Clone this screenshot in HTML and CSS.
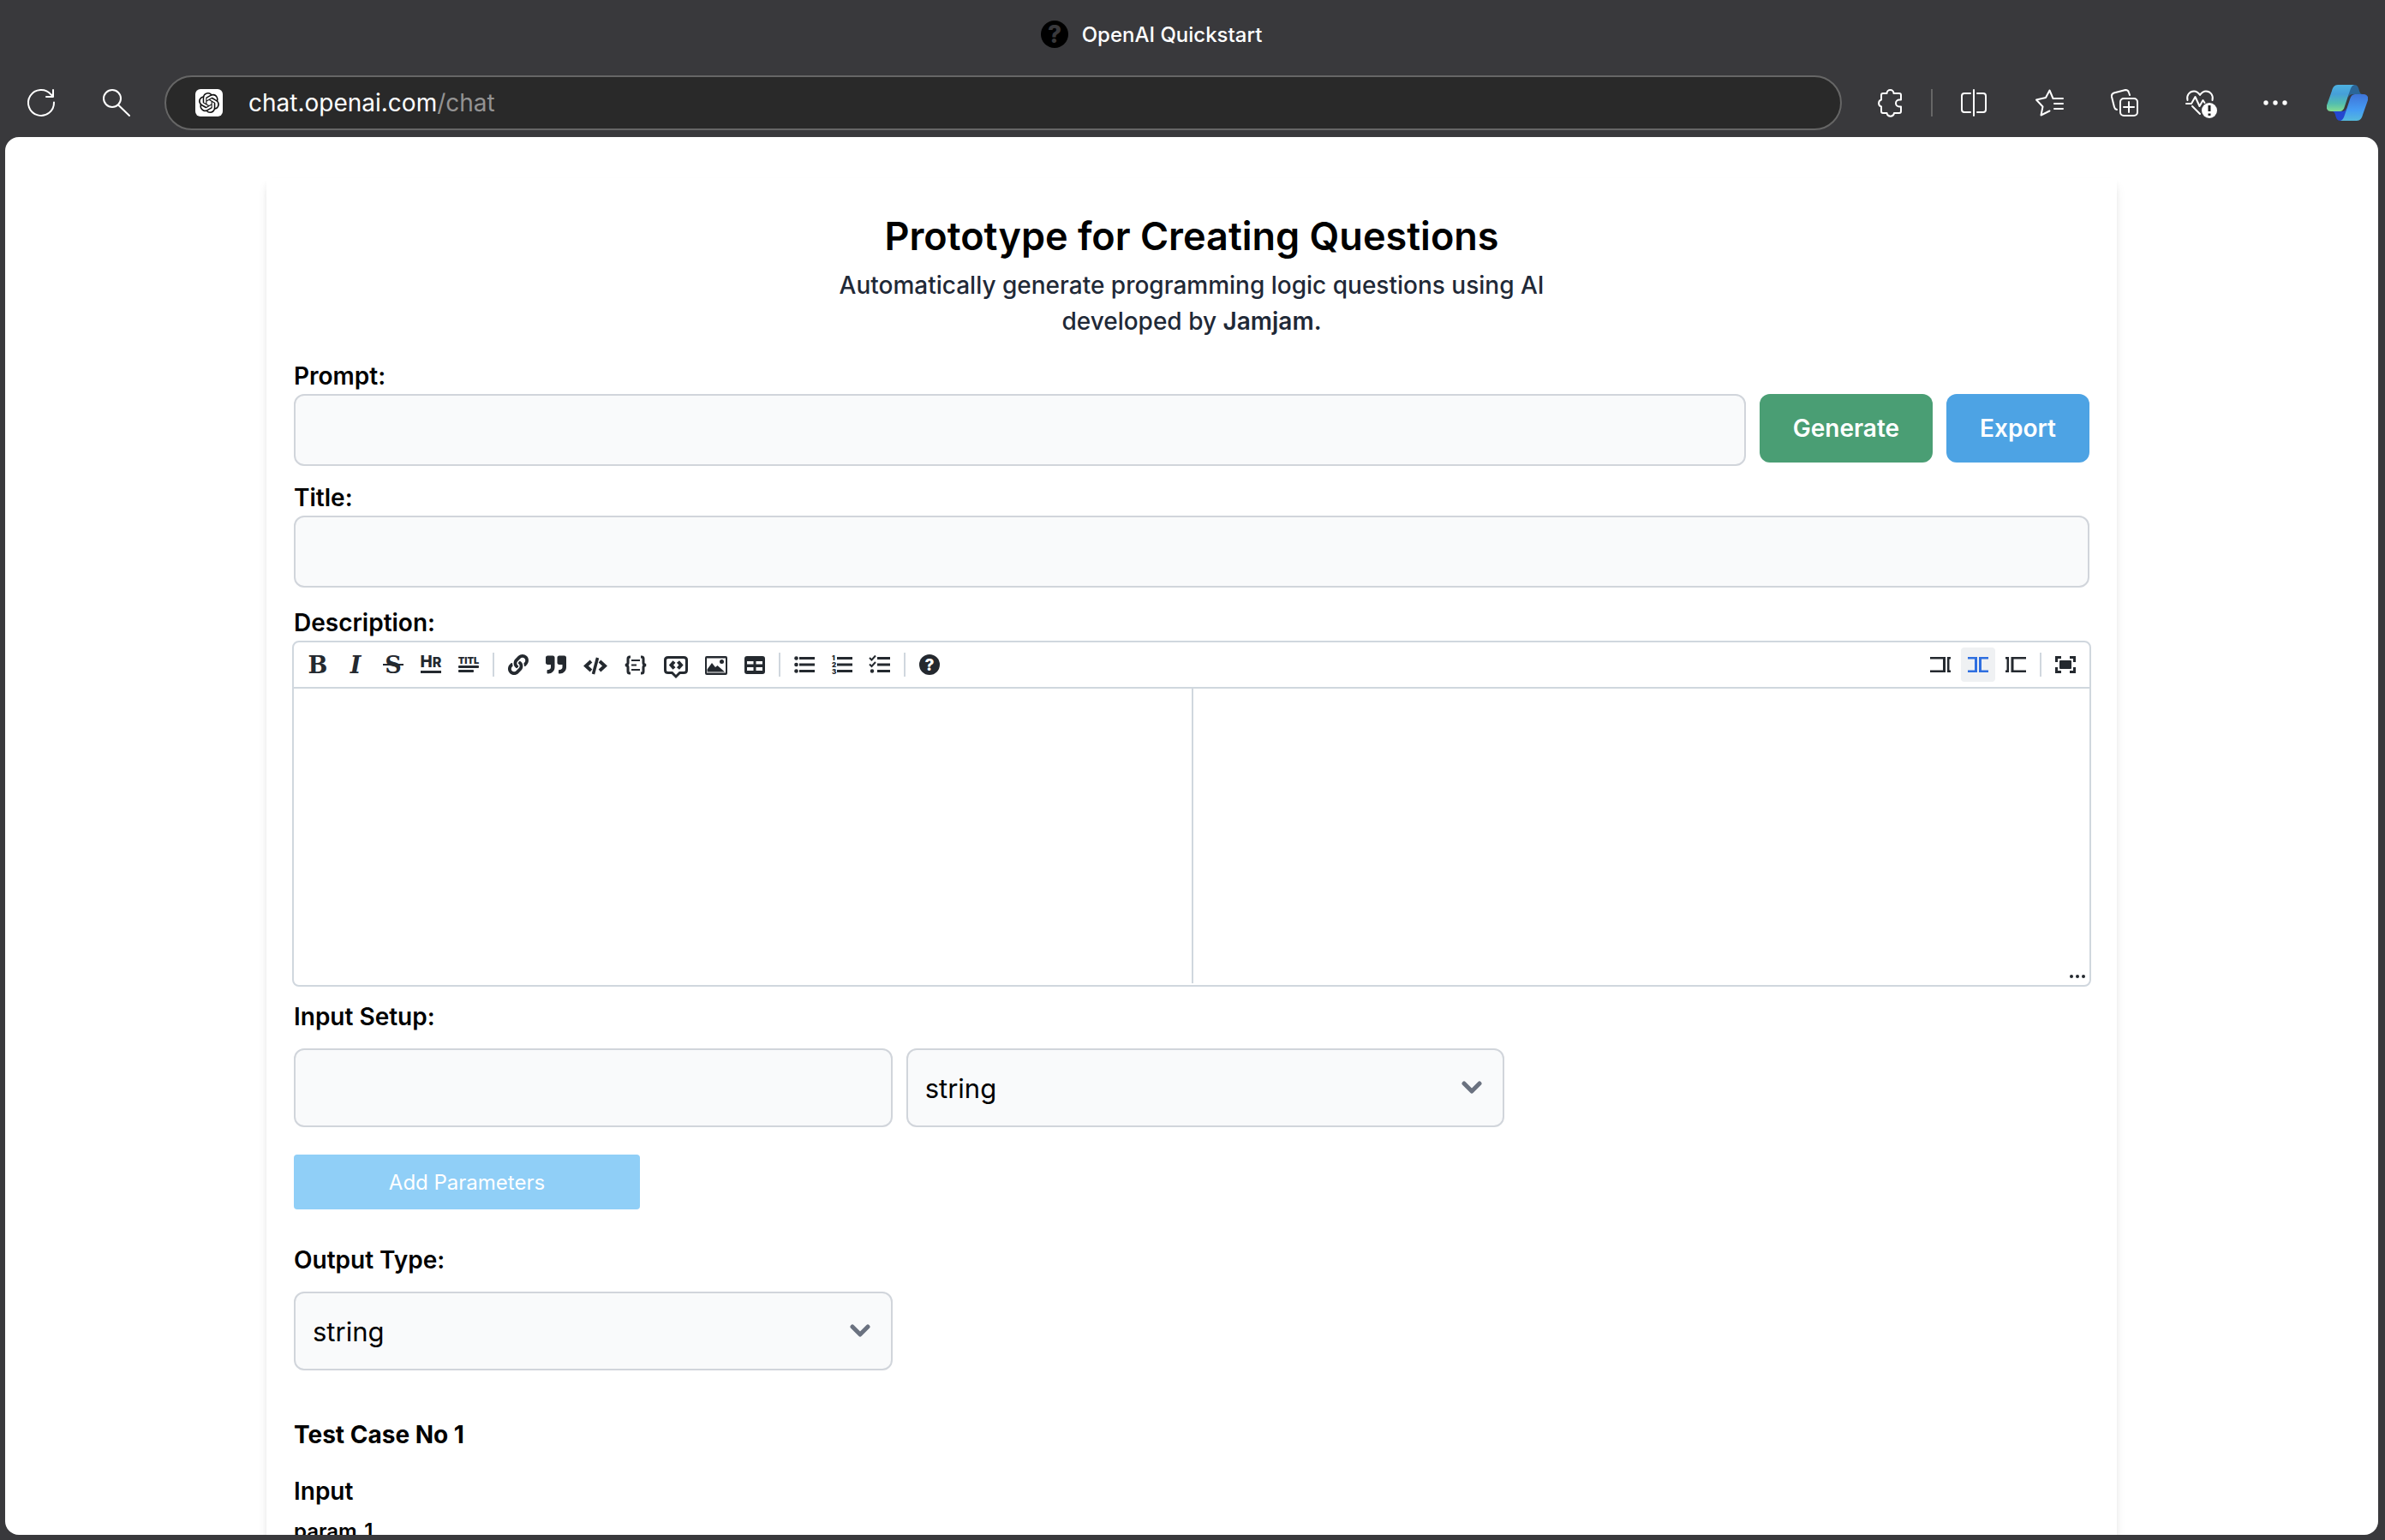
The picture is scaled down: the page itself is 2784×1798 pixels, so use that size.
FILE: index.html
```html
<!DOCTYPE html>
<html lang="en">
<head>
<meta charset="utf-8">
<title>OpenAI Quickstart</title>
<link rel="stylesheet" href="styles.css">
</head>
<body>
<div class="window">
  <header class="titlebar">
    <svg class="icon-md" viewBox="0 0 32 32" aria-hidden="true"><circle cx="16" cy="16" r="16" fill="#000"/><text class="favicon-mark" x="16" y="26" text-anchor="middle">?</text></svg>
    <span class="tab-title">OpenAI Quickstart</span>
  </header>

  <nav class="navbar" aria-label="Browser">
    <div class="nav-group">
      <button class="nav-btn" type="button" aria-label="Reload"><svg class="icon-md line" viewBox="0 0 32 32"><path d="M31 15.500A15 15 0 1 1 27.500 6.300L30 8.800M30 1v8h-8"/></svg></button>
      <button class="nav-btn" type="button" aria-label="Search"><svg class="icon-md line" viewBox="0 0 32 32"><circle cx="11" cy="11" r="10"/><path d="M18 18.500L31 31"/></svg></button>
    </div>
    <div class="address">
      <svg class="icon-md" viewBox="0 0 32 32" aria-hidden="true"><rect width="32" height="32" rx="6" fill="#fff"/><path transform="translate(4 4)" fill="#111" d="M22.2819 9.8211a5.9847 5.9847 0 0 0-.5157-4.9108 6.0462 6.0462 0 0 0-6.5098-2.9A6.0651 6.0651 0 0 0 4.9807 4.1818a5.9847 5.9847 0 0 0-3.9977 2.9 6.0462 6.0462 0 0 0 .7427 7.0966 5.98 5.98 0 0 0 .511 4.9107 6.051 6.051 0 0 0 6.5146 2.9001A5.9847 5.9847 0 0 0 13.2599 24a6.0557 6.0557 0 0 0 5.7718-4.2058 5.9894 5.9894 0 0 0 3.9977-2.9001 6.0557 6.0557 0 0 0-.7475-7.0729zm-9.022 12.6081a4.4755 4.4755 0 0 1-2.8764-1.0408l.1419-.0804 4.7783-2.7582a.7948.7948 0 0 0 .3927-.6813v-6.7369l2.02 1.1686a.071.071 0 0 1 .038.052v5.5826a4.504 4.504 0 0 1-4.4945 4.4944zm-9.6607-4.1254a4.4708 4.4708 0 0 1-.5346-3.0137l.142.0852 4.783 2.7582a.7712.7712 0 0 0 .7806 0l5.8428-3.3685v2.3324a.0804.0804 0 0 1-.0332.0615L9.74 19.9502a4.4992 4.4992 0 0 1-6.1408-1.6464zM2.3408 7.8956a4.485 4.485 0 0 1 2.3655-1.9728V11.6a.7664.7664 0 0 0 .3879.6765l5.8144 3.3543-2.0201 1.1685a.0757.0757 0 0 1-.071 0l-4.8303-2.7865A4.504 4.504 0 0 1 2.3408 7.872zm16.5963 3.8558L13.1038 8.364 15.1192 7.2a.0757.0757 0 0 1 .071 0l4.8303 2.7913a4.4944 4.4944 0 0 1-.6765 8.1042v-5.6772a.79.79 0 0 0-.407-.667zm2.0107-3.0231l-.142-.0852-4.7735-2.7818a.7759.7759 0 0 0-.7854 0L9.409 9.2297V6.8974a.0662.0662 0 0 1 .0284-.0615l4.8303-2.7866a4.4992 4.4992 0 0 1 6.6802 4.66zM8.3065 12.863l-2.02-1.1638a.0804.0804 0 0 1-.038-.0567V6.0742a4.4992 4.4992 0 0 1 7.3757-3.4537l-.142.0805L8.704 5.459a.7948.7948 0 0 0-.3927.6813zm1.0976-2.3654l2.602-1.4998 2.6069 1.4998v2.9994l-2.5974 1.4997-2.6067-1.4997Z"/></svg>
      <span class="url">chat.openai.com<span class="url-path">/chat</span></span>
    </div>
    <div class="nav-tools">
      <button class="nav-btn" type="button" aria-label="Extensions"><svg class="icon-md line" viewBox="0 0 32 32"><path d="M6 7a2 2 0 0 1 2-2h4.500a4 4 0 0 1 8 0H27a2 2 0 0 1 2 2v5.500h-2a3.500 3.500 0 0 0 0 8h2V26a2 2 0 0 1-2 2h-6a4.300 4.300 0 0 1-8.500 0H8a2 2 0 0 1-2-2v-5.500a4.200 4.200 0 0 1 0-8z"/></svg></button>
      <span class="nav-sep"></span>
      <button class="nav-btn" type="button" aria-label="Split screen"><svg class="icon-md line" viewBox="0 0 32 32"><path d="M16 1v30M12 5H5a3 3 0 0 0-3 3v16a3 3 0 0 0 3 3h7M20 5h7a3 3 0 0 1 3 3v16a3 3 0 0 1-3 3h-7"/></svg></button>
      <button class="nav-btn" type="button" aria-label="Favorites"><svg class="icon-md line" viewBox="0 0 32 32"><path d="M20.500 11L16.500 1.500 12 10 1 12.500l7.500 8-2 10 10-5M20.500 11H32M22 17h10M22 23h10"/></svg></button>
      <button class="nav-btn" type="button" aria-label="Collections"><svg class="icon-md line" viewBox="0 0 32 32"><rect x="11" y="11" width="20" height="20" rx="4"/><path d="M21 15v12M15 21h12M7 24a4 4 0 0 1-3-3L1 9a4 4 0 0 1 2.500-4.500L17 1a4 4 0 0 1 4 3l1 3"/></svg></button>
      <button class="nav-btn" type="button" aria-label="Browser essentials"><svg class="icon-md line" viewBox="0 0 32 32"><path d="M1.500 13C0 7 4 2.500 9 2.500c3 0 5 1.500 7 4.500 2-3 4-4.500 7-4.500 5 0 9 4.500 7.500 10.500M0 17h6l4.500-8 5 11 4-7 2 3M7 20l9 9"/><circle cx="27" cy="25" r="9" fill="#fff" stroke="none"/><path class="alert" d="M27 19v7M27 28.500v2.500"/></svg></button>
      <button class="nav-btn" type="button" aria-label="Settings and more"><svg class="icon-md" viewBox="0 0 32 32" fill="#fff"><circle cx="5" cy="16" r="2.700"/><circle cx="16" cy="16" r="2.700"/><circle cx="27" cy="16" r="2.700"/></svg></button>
    </div>
    <button class="nav-btn" type="button" aria-label="Copilot"><svg class="icon-lg" viewBox="0 0 48 48">
      <defs>
        <linearGradient id="cg1" x1="0" y1="0" x2="0" y2="1"><stop offset="0" stop-color="#4db1e0"/><stop offset=".35" stop-color="#469fd8"/><stop offset=".7" stop-color="#52bdb0"/><stop offset="1" stop-color="#84dc90"/></linearGradient>
        <linearGradient id="cg2" x1="0" y1="0" x2="0" y2="1"><stop offset="0" stop-color="#3f74d8"/><stop offset=".6" stop-color="#459cf3"/><stop offset="1" stop-color="#55b9dc"/></linearGradient>
      </defs>
      <path fill="#2b6698" d="M27 3h5c4 0 5 3 6 7 1 3 2 4 4 4H31c-3 0-5 1-6 4z"/>
      <path fill="#2447cf" d="M21 45h-5c-4 0-5-3-6-7-1-3-2-4-4-4h11c3 0 5-1 6-4z"/>
      <path fill="url(#cg1)" d="M13 3h19c-3 1-4 4-5 7l-6 18c-1 4-3 6-6 6H5c-4 0-6-3-5-7l6-17c1-4 3-7 7-7z"/>
      <path fill="url(#cg2)" d="M35 45H16c3-1 4-4 5-7l6-18c1-4 3-6 6-6h10c4 0 6 3 5 7l-6 17c-1 4-3 7-7 7z"/>
    </svg></button>
  </nav>

  <div class="viewport">
    <main class="card">
      <div class="intro">
        <h1>Prototype for Creating Questions</h1>
        <p>Automatically generate programming logic questions using AI<br>developed by <strong>Jamjam.</strong></p>
      </div>

      <form class="form">
        <div class="field">
          <label for="prompt">Prompt:</label>
          <div class="row">
            <input class="box grow" id="prompt" type="text">
            <button class="btn btn-green" type="button">Generate</button>
            <button class="btn btn-blue" type="button">Export</button>
          </div>
        </div>

        <div class="field field-title">
          <label for="title">Title:</label>
          <input class="box" id="title" type="text">
        </div>

        <div class="field field-desc">
          <label for="description">Description:</label>
          <div class="editor">
            <div class="toolbar">
              <div class="tools">
                <button type="button" aria-label="Bold"><svg width="24" height="24" viewBox="0 0 24 24"><text class="slab" x="12" y="22" text-anchor="middle">B</text></svg></button>
                <button type="button" aria-label="Italic"><svg width="24" height="24" viewBox="0 0 24 24"><text class="slab slanted" x="12" y="22" text-anchor="middle">I</text></svg></button>
                <button type="button" aria-label="Strikethrough"><svg width="24" height="24" viewBox="0 0 24 24"><text class="slab" x="12" y="22" text-anchor="middle">S</text><path d="M0 11h24v2H0z"/></svg></button>
                <button type="button" aria-label="Horizontal rule"><svg width="24" height="24" viewBox="0 0 24 24"><text class="hr-mark" x="12" y="15" text-anchor="middle">H<tspan class="hr-small">R</tspan></text><path d="M0 19h24v3H0z"/></svg></button>
                <button type="button" aria-label="Title"><svg width="24" height="24" viewBox="0 0 24 24"><text class="titl-mark" x="12" y="11" text-anchor="middle">TITL</text><rect y="13" width="24" height="3" rx="1"/><rect y="18" width="18" height="3" rx="1"/></svg></button>
                <span class="sep"></span>
                <button type="button" aria-label="Link"><svg width="24" height="24" viewBox="0 0 512 512"><path d="M326.612 185.391c59.747 59.809 58.927 155.698.36 214.59-.11.12-.24.25-.36.37l-67.2 67.2c-59.27 59.27-155.699 59.262-214.96 0-59.27-59.26-59.27-155.7 0-214.96l37.106-37.106c9.84-9.84 26.786-3.3 27.294 10.606.648 17.722 3.826 35.527 9.69 52.721 1.986 5.822.567 12.262-3.783 16.612l-13.087 13.087c-28.026 28.026-28.905 73.66-1.155 101.96 28.024 28.579 74.086 28.749 102.325.51l67.2-67.19c28.191-28.191 28.073-73.757 0-101.83-3.701-3.694-7.429-6.564-10.341-8.569a16.037 16.037 0 0 1-6.947-12.606c-.396-10.567 3.348-21.456 11.698-29.806l21.054-21.055c5.521-5.521 14.182-6.199 20.584-1.731a152.482 152.482 0 0 1 20.522 17.197zM467.547 44.449c-59.261-59.262-155.69-59.27-214.96 0l-67.2 67.2c-.12.12-.25.25-.36.37-58.566 58.892-59.387 154.781.36 214.59a152.454 152.454 0 0 0 20.521 17.196c6.402 4.468 15.064 3.789 20.584-1.731l21.054-21.055c8.35-8.35 12.094-19.239 11.698-29.806a16.037 16.037 0 0 0-6.947-12.606c-2.912-2.005-6.64-4.875-10.341-8.569-28.073-28.073-28.191-73.639 0-101.83l67.2-67.19c28.239-28.239 74.3-28.069 102.325.51 27.75 28.3 26.872 73.934-1.155 101.96l-13.087 13.087c-4.35 4.35-5.769 10.79-3.783 16.612 5.864 17.194 9.042 34.999 9.69 52.721.509 13.906 17.454 20.446 27.294 10.606l37.106-37.106c59.271-59.259 59.271-155.699.001-214.959z"/></svg></button>
                <button type="button" aria-label="Quote"><svg width="24" height="24" viewBox="0 0 512 512"><path d="M464 32H336c-26.500 0-48 21.500-48 48v128c0 26.500 21.500 48 48 48h80v64c0 35.300-28.700 64-64 64h-8c-13.300 0-24 10.700-24 24v48c0 13.300 10.700 24 24 24h8c88.400 0 160-71.600 160-160V80c0-26.500-21.500-48-48-48zm-288 0H48C21.500 32 0 53.500 0 80v128c0 26.500 21.500 48 48 48h80v64c0 35.300-28.700 64-64 64h-8c-13.300 0-24 10.700-24 24v48c0 13.300 10.700 24 24 24h8c88.400 0 160-71.600 160-160V80c0-26.500-21.500-48-48-48z"/></svg></button>
                <button type="button" aria-label="Inline code"><svg class="stroke" width="28" height="24" viewBox="0 0 28 24"><path stroke-width="4" d="M9 8l-6 5.500L9 19M19 8l6 5.500L19 19"/><path stroke-width="3.500" d="M16.500 4l-5 19"/></svg></button>
                <button type="button" aria-label="Code block"><svg class="stroke" width="26" height="24" viewBox="0 0 26 24"><path stroke-width="3" d="M7 3H6Q4 3 4 5v5q0 2-3 2.500Q4 13 4 15v5q0 2 2 2h1M19 3h1q2 0 2 2v5q0 2 3 2.500-3 .5-3 2.500v5q0 2-2 2h-1"/><path stroke-width="2" d="M8 7h10M8 12.500h6M8 18h10"/></svg></button>
                <button type="button" aria-label="Comment"><svg class="stroke" width="28" height="24" viewBox="0 0 28 24"><path stroke-width="3" d="M5 3.500h18q3.500 0 3.500 3v12q0 3-3.500 3h-4.500L14 26l-4.500-4.500H5q-3.500 0-3.500-3v-12q0-3 3.500-3z"/><path stroke-width="4" d="M12 8.500l-3.500 4 3.500 4M16.500 8.500l3.500 4-3.500 4"/></svg></button>
                <button type="button" aria-label="Image"><svg width="26" height="26" viewBox="0 0 26 26"><path fill-rule="evenodd" d="M2 3h22q2 0 2 2v18q0 2-2 2H2q-2 0-2-2V5q0-2 2-2zm0 2.500v17h22v-17z"/><circle cx="19.500" cy="9.500" r="2.500"/><path d="M2.500 21.500v-3L8 11l4 5 2.500-2 8.500 7.500z"/></svg></button>
                <button type="button" aria-label="Table"><svg width="24" height="24" viewBox="0 0 24 24"><path fill-rule="evenodd" d="M3 2h18q3 0 3 3v15q0 3-3 3H3q-3 0-3-3V5q0-3 3-3zm0 6v3.500h7.500V8zm10.500 0v3.500H21V8zM3 15v4h7.500v-4zm10.500 0v4H21v-4z"/></svg></button>
                <span class="sep"></span>
                <button type="button" aria-label="Bulleted list"><svg width="24" height="24" viewBox="0 0 24 24"><circle cx="2.500" cy="4.500" r="2.300"/><circle cx="2.500" cy="12" r="2.300"/><circle cx="2.500" cy="19.500" r="2.300"/><path d="M6 3h18v3H6zM6 10.500h18v3H6zM6 18h18v3H6z"/></svg></button>
                <button type="button" aria-label="Numbered list"><svg width="24" height="24" viewBox="0 0 24 24"><text class="digit" x="0" y="7">1</text><text class="digit" x="0" y="15">2</text><text class="digit" x="0" y="23">3</text><path d="M6 3h18v3H6zM6 10.500h18v3H6zM6 18h18v3H6z"/></svg></button>
                <button type="button" aria-label="Check list"><svg width="24" height="24" viewBox="0 0 24 24"><path fill="none" stroke="currentColor" stroke-width="2" d="M0 4l2.500 2.500 4.500-5M0 11.500L2.500 14 7 9"/><circle cx="3" cy="19.500" r="2.200"/><path d="M9 3h15v3H9zM9 10.500h15v3H9zM9 18h15v3H9z"/></svg></button>
                <span class="sep"></span>
                <button type="button" aria-label="Help"><svg width="24" height="24" viewBox="0 0 24 24"><circle cx="12" cy="12" r="12"/><text class="help-mark" x="12" y="19" text-anchor="middle">?</text></svg></button>
              </div>
              <div class="tools">
                <button type="button" aria-label="Edit"><svg width="24" height="24" viewBox="0 0 24 24"><path d="M0 3h18v18H0v-2.500h15v-13H0zM20 3h4v2.500h-1.500v13H24V21h-4z"/></svg></button>
                <button class="active" type="button" aria-label="Live" aria-pressed="true"><svg width="24" height="24" viewBox="0 0 24 24"><path d="M0 3h11v18H0v-2.500h8v-13H0zM24 3H13v18h11v-2.500h-8v-13h8z"/></svg></button>
                <button type="button" aria-label="Preview"><svg width="24" height="24" viewBox="0 0 24 24"><path d="M24 3H6.500v18H24v-2.500H9.500v-13H24zM4 3H0v2.500h1.500v13H0V21h4z"/></svg></button>
                <span class="sep"></span>
                <button type="button" aria-label="Full screen"><svg class="stroke" width="24" height="24" viewBox="0 0 24 24"><path stroke-width="3" d="M1.500 9V3.500H7M17 3.500h5.500V9M22.500 15v5.500H17M7 20.500H1.500V15"/><rect x="5" y="7" width="14" height="10" rx="1" fill="currentColor" stroke="none"/></svg></button>
              </div>
            </div>
            <div class="panes">
              <textarea id="description"></textarea>
              <div class="preview"></div>
              <svg class="grip" width="18" height="4" viewBox="0 0 18 4" aria-hidden="true"><circle cx="2" cy="2" r="2"/><circle cx="9" cy="2" r="2"/><circle cx="16" cy="2" r="2"/></svg>
            </div>
          </div>
        </div>

        <div class="field field-setup">
          <label for="param-name">Input Setup:</label>
          <div class="row">
            <input class="box box-tall third" id="param-name" type="text">
            <div class="select third">
              <select class="box box-tall" aria-label="Parameter type"><option>string</option><option>number</option></select>
              <svg class="chevron" viewBox="0 0 24 16"><path d="M3 3l9 9 9-9"/></svg>
            </div>
          </div>
        </div>
        <button class="btn-add" type="button">Add Parameters</button>

        <div class="field field-output">
          <label for="output-type">Output Type:</label>
          <div class="select third">
            <select class="box box-tall" id="output-type"><option>string</option><option>number</option></select>
            <svg class="chevron" viewBox="0 0 24 16"><path d="M3 3l9 9 9-9"/></svg>
          </div>
        </div>

        <section class="case">
          <h2>Test Case No 1</h2>
          <h3>Input</h3>
          <label class="param" for="param-1">param_1</label>
          <input class="box" id="param-1" type="text">
        </section>
      </form>
    </main>
  </div>
</div>
</body>
</html>
```
FILE: styles.css
```css
*, *::before, *::after { box-sizing: border-box; }

body {
  margin: 0;
  background: #39393c;
  font-family: Inter, "Liberation Sans", sans-serif;
  color: #000;
}

button, input, select, textarea { font: inherit; color: inherit; margin: 0; }
button { border: 0; padding: 0; background: none; cursor: pointer; }
svg { display: block; }

/* Browser frame */
.window {
  display: flex;
  flex-direction: column;
  height: 100vh;
  padding: 0 8px 6px 6px;
}
.titlebar {
  display: flex;
  align-items: center;
  justify-content: center;
  gap: 16px;
  height: 80px;
  padding-right: 94px;
  color: #fff;
}
.tab-title { font-size: 24px; font-weight: 500; }
.favicon-mark { font-size: 28px; font-weight: 800; fill: #39393c; }
.navbar {
  display: flex;
  align-items: center;
  height: 80px;
  padding: 0 12px 0 26px;
}
.nav-group { display: flex; gap: 56px; margin-right: 40px; }
.icon-md { width: 32px; height: 32px; overflow: visible; }
.icon-lg { width: 48px; height: 48px; }
.line { fill: none; stroke: #fff; stroke-width: 2; stroke-linejoin: round; stroke-linecap: round; }
.line .alert { stroke: #222; stroke-width: 3; stroke-linecap: butt; }
.address {
  flex: 1;
  display: flex;
  align-items: center;
  gap: 30px;
  height: 64px;
  padding: 0 34px;
  border: 2px solid #666;
  border-radius: 32px;
  background: #292929;
}
.url { font-size: 28px; font-weight: 400; color: #fff; }
.url-path { color: #939393; }
.nav-tools { display: flex; align-items: center; gap: 56px; margin: 0 44px 0 40px; }
.nav-sep { width: 2px; height: 32px; margin: 0 -24px; background: #666; }

/* Page */
.viewport {
  flex: 1;
  min-height: 0;
  overflow: auto;
  scrollbar-width: none;
  border-radius: 16px;
  background: #fff;
}
.card {
  max-width: 2160px;
  margin: 48px auto 0;
  padding: 32px;
  box-shadow: 0 8px 12px -2px rgba(0, 0, 0, .1), 0 4px 8px -2px rgba(0, 0, 0, .06);
}
.intro { text-align: center; }
h1 { margin: 0; font-size: 45px; line-height: 72px; font-weight: 600; }
p { margin: 0; font-size: 28px; line-height: 42px; font-weight: 500; color: #1f2937; }
strong { font-weight: 600; }

.field { display: flex; flex-direction: column; }
.field > label { font-size: 28px; line-height: 42px; font-weight: 600; align-self: flex-start; }
.form { padding-top: 22px; }
.row { display: flex; align-items: flex-start; gap: 16px; }
.grow { flex: 1; }
.third { width: 33.333%; }

.box {
  height: 84px;
  padding: 0 20px;
  border: 2px solid #d1d5db;
  border-radius: 12px;
  background: #f9fafb;
  font-size: 31px;
}
.box-tall { height: 92px; }

.btn {
  height: 80px;
  padding: 0 39px;
  border-radius: 12px;
  font-size: 28px;
  font-weight: 600;
  color: #fff;
}
.btn-green { background: #4a9e74; }
.btn-blue { background: #4da3e4; }

.field-title { padding-top: 16px; }
.field-desc { padding-top: 20px; }
.field-setup { padding-top: 14px; }
.field-setup > label, .field-output > label { margin-bottom: 16px; }

/* Markdown editor */
.editor {
  margin: 0 -2px;
  border: 2px solid #d0d7de;
  border-radius: 8px;
}
.toolbar {
  display: flex;
  justify-content: space-between;
  padding: 6px 8px;
  border-bottom: 2px solid #d0d7de;
}
.tools { display: flex; align-items: center; gap: 4px; }
.tools button {
  display: flex;
  align-items: center;
  height: 40px;
  padding: 0 8px;
  border-radius: 4px;
  color: #24292f;
}
.tools svg { fill: currentColor; overflow: visible; }
.tools .stroke { fill: none; stroke: currentColor; }
.tools .active { background: #eff1f3; color: #2f6fe0; }
.sep { width: 2px; height: 28px; margin: 0 4px; background: #d0d7de; }
.slab { font-family: "DejaVu Serif", serif; font-size: 27px; font-weight: 700; }
.slanted { font-style: italic; }
.hr-mark { font-size: 19px; font-weight: 800; }
.hr-small { font-size: 16px; }
.titl-mark { font-size: 11px; font-weight: 900; }
.digit { font-size: 8px; font-weight: 900; }
.help-mark { font-size: 19px; font-weight: 800; fill: #fff; }
.panes { position: relative; display: grid; grid-template-columns: 1fr 1fr; height: 346px; }
.panes textarea { padding: 20px; border: 0; resize: none; background: none; outline: 0; font-size: 28px; }
.preview { margin-bottom: 2px; border-left: 2px solid #d0d7de; }
.grip { position: absolute; right: 5px; bottom: 8px; fill: #24292f; }

/* Selects */
.select { display: grid; align-items: center; }
.select > * { grid-area: 1 / 1; }
.select select { width: 100%; appearance: none; }
.chevron {
  justify-self: end;
  width: 24px;
  height: 16px;
  margin-right: 26px;
  pointer-events: none;
  fill: none;
  stroke: #6b7280;
  stroke-width: 5;
  stroke-linecap: round;
  stroke-linejoin: round;
}

.btn-add {
  width: 404px;
  height: 64px;
  margin: 32px 0 38px;
  border-radius: 4px;
  background: #90cff7;
  color: #fff;
  font-size: 24px;
}

.case { display: flex; flex-direction: column; padding-top: 54px; }
h2, h3 { margin: 0; font-size: 28px; line-height: 42px; }
h2 { font-weight: 700; }
h3 { font-weight: 600; padding-top: 24px; }
.param { font-size: 24px; line-height: 36px; font-weight: 600; padding: 8px 0; }
```
